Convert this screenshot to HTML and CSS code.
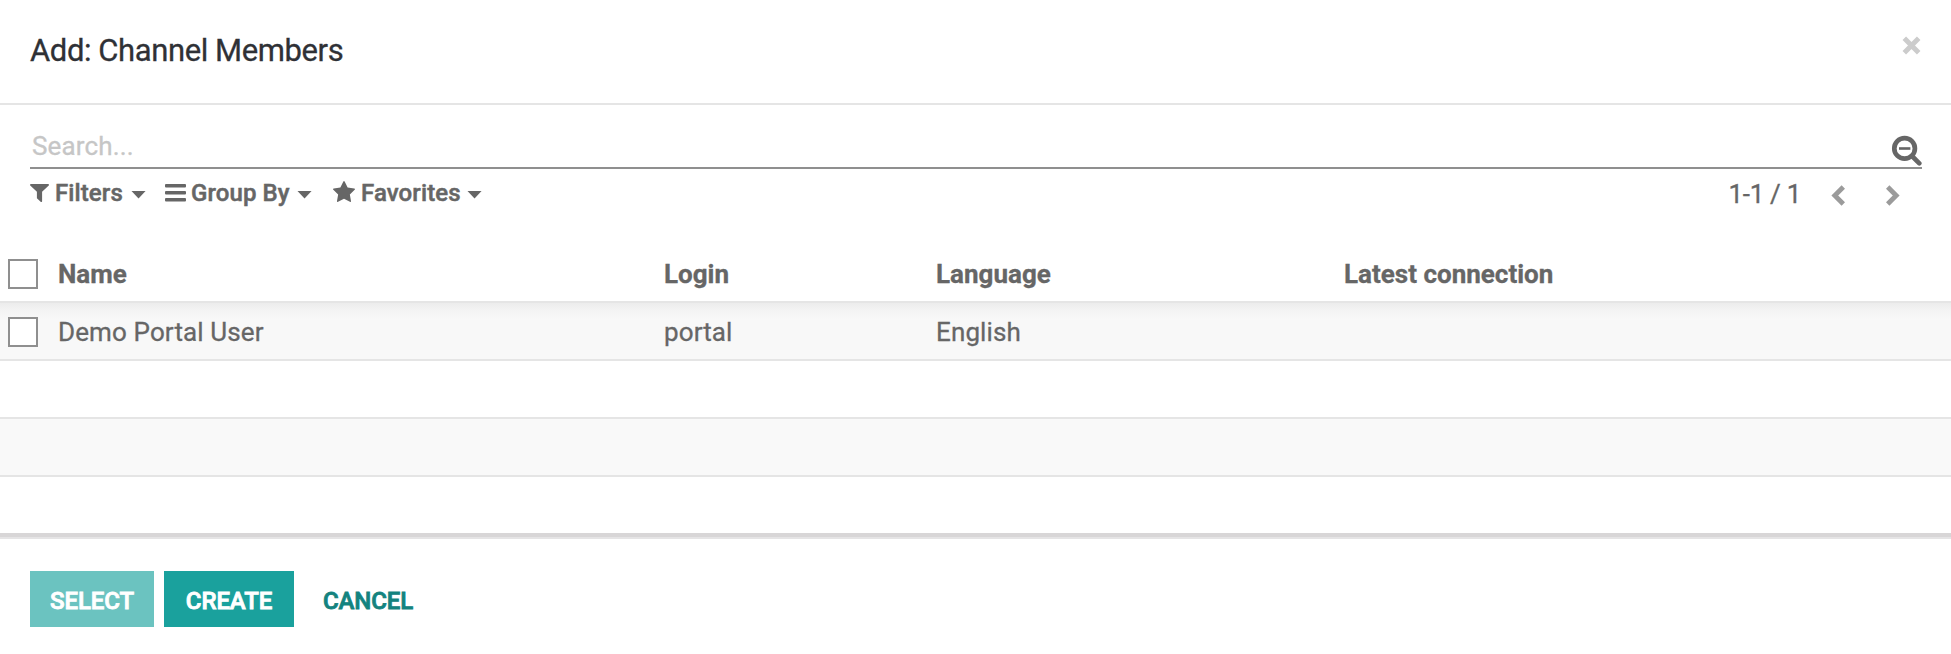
FILE: index.html
```html
<!DOCTYPE html>
<html lang="en">
<head>
<meta charset="utf-8">
<title>Add: Channel Members</title>
<link rel="stylesheet" href="styles.css">
</head>
<body>
<div class="modal">
  <header class="modal-header">
    <h4 class="modal-title">Add: Channel Members</h4>
    <button class="close" aria-label="Close">
      <svg width="19" height="19" viewBox="0 0 19 19"><path d="M2.3 2.3l14.4 14.4M16.700 2.300L2.300 16.700" fill="none" stroke="#ccc" stroke-width="5"/></svg>
    </button>
  </header>

  <section class="controls">
    <div class="search">
      <span class="placeholder">Search...</span>
      <svg class="search-icon" width="31" height="31" viewBox="0 0 31 31" fill="none" stroke="#666">
        <circle cx="13.600" cy="13.400" r="10.300" stroke-width="4.700"/>
        <path d="M21 21L28.300 28.300" stroke-width="4.600" stroke-linecap="round"/>
        <path d="M8 13.500h11.400" stroke-width="2.600"/>
      </svg>
    </div>
    <div class="toolbar">
      <button class="menu menu-filters">
        <svg width="19" height="18" viewBox="193 256 1406 1408" preserveAspectRatio="none"><path fill="#666" d="M1595 295q17 41-14 70l-493 493v742q0 42-39 59-13 5-25 5-27 0-45-19l-256-256q-19-19-19-45v-486l-493-493q-31-29-14-70 17-39 59-39h1280q42 0 59 39z"/></svg>
        <span class="label">Filters</span><i class="caret"></i>
      </button>
      <button class="menu menu-group">
        <svg width="21" height="18" viewBox="0 0 21 18" fill="#666"><rect width="21" height="3.500" rx="1"/><rect y="7" width="21" height="3.500" rx="1"/><rect y="14" width="21" height="3.500" rx="1"/></svg>
        <span class="label">Group By</span><i class="caret"></i>
      </button>
      <button class="menu menu-favorites">
        <svg class="star" width="22" height="21" viewBox="64 32 1664 1588" preserveAspectRatio="none"><path fill="#666" d="M1728 647q0 22-26 48l-363 354 86 500q1 7 1 20 0 21-10.500 35.500t-30.500 14.500q-19 0-40-12l-449-236-449 236q-22 12-40 12-21 0-31.500-14.500t-10.500-35.500q0-6 2-20l86-500-364-354q-25-27-25-48 0-37 56-46l502-73 225-455q19-41 49-41t49 41l225 455 502 73q56 9 56 46z"/></svg>
        <span class="label">Favorites</span><i class="caret"></i>
      </button>
      <div class="pager">
        <span class="pager-value">1-1 / 1</span>
        <svg class="prev" width="15" height="22" viewBox="0 0 15 22"><path d="M12.300 3L3.800 11.500l8.500 8.500" fill="none" stroke="#9b9b9b" stroke-width="4.800"/></svg>
        <svg class="next" width="15" height="22" viewBox="0 0 15 22"><path d="M2.700 3l8.500 8.500-8.500 8.500" fill="none" stroke="#9b9b9b" stroke-width="4.800"/></svg>
      </div>
    </div>
  </section>

  <section class="list">
    <div class="row head">
      <span class="check"><i class="box"></i></span><span class="name">Name</span><span>Login</span><span>Language</span><span class="latest">Latest connection</span>
    </div>
    <div class="row data">
      <span class="check"><i class="box"></i></span><span class="name">Demo Portal User</span><span>portal</span><span>English</span><span></span>
    </div>
    <div class="row"></div>
    <div class="row striped"></div>
    <div class="row last"></div>
  </section>

  <footer class="modal-footer">
    <button class="btn select">SELECT</button>
    <button class="btn create">CREATE</button>
    <button class="btn cancel">CANCEL</button>
  </footer>
</div>
</body>
</html>
```
FILE: styles.css
```css
* { box-sizing: border-box; }
body {
  margin: 0;
  background: #fff;
  color: #666;
  font-family: Roboto, "Liberation Sans", sans-serif;
  font-size: 26px;
  -webkit-text-stroke-width: .3px;
}
button { border: 0; padding: 0; background: none; font: inherit; color: inherit; }
svg { display: block; flex: none; }
.modal { height: 654px; overflow: hidden; display: flex; flex-direction: column; }

.modal-header {
  height: 105px;
  flex: none;
  padding: 0 30px;
  border-bottom: 2px solid #e5e5e5;
  display: flex;
  justify-content: space-between;
}
.modal-title {
  margin: 33px 0 0;
  font-size: 31px;
  font-weight: 400;
  line-height: 36px;
  letter-spacing: -.41px;
  color: #2f3136;
}
.close { height: 19px; margin-top: 36px; }

.controls { height: 140px; flex: none; padding: 0 29px 0 30px; }
.search {
  height: 64px;
  border-bottom: 2px solid #8f8f8f;
  display: flex;
  justify-content: space-between;
}
.placeholder { margin: 26px 0 0 2px; line-height: 30px; letter-spacing: .15px; color: #c6c6c6; }
.search-icon { margin-top: 30px; }

.toolbar { display: flex; padding-top: 10px; height: 50px; }
.menu {
  display: flex;
  align-items: center;
  height: 28px;
  font-size: 24px;
  font-weight: 500;
  line-height: 28px;
  letter-spacing: .1px;
  -webkit-text-stroke-width: .5px;
}
.menu .label { text-align: left; white-space: nowrap; }
.menu-filters { width: 135px; }
.menu-group { width: 168px; }
.menu-filters .label { width: 76px; margin-left: 6px; }
.menu-group .label { width: 106px; margin-left: 5px; }
.menu-favorites .label { width: 106px; margin-left: 6px; }
.star { margin-top: -3px; }
.caret { width: 15px; height: 8px; margin-top: 3px; background: #666; clip-path: polygon(0 0, 100% 0, 50% 100%); }

.pager { display: flex; margin-left: auto; padding-right: 22px; }
.pager-value { line-height: 30px; letter-spacing: -.3px; }
.prev, .next { margin-top: 5px; }
.prev { margin-left: 30px; }
.next { margin-left: 39px; }

.list { flex: none; }
.row {
  height: 58px;
  border-bottom: 2px solid #e5e5e5;
  display: grid;
  grid-template-columns: 58px 606px 272px 408px 1fr;
  line-height: 58px;
}
.head { font-weight: 700; }
.data {
  background: linear-gradient(#ececec, #f3f3f3 7px, #f8f8f8 16px);
  letter-spacing: .12px;
}
.striped { background: #f9f9f9; }
.last { height: 62px; border-bottom: 0; box-shadow: inset 0 -2px #e5e4e5, inset 0 -6px #d8d6d7; }
.check { padding: 14px 0 0 8px; line-height: 0; }
.box { display: block; width: 30px; height: 30px; background: #fff; border: 2px solid #8f8f8f; }

.modal-footer { display: flex; padding: 32px 30px 0; }
.btn {
  height: 56px;
  padding-top: 4px;
  font-size: 24px;
  font-weight: 500;
  line-height: 52px;
  letter-spacing: -.1px;
  -webkit-text-stroke-width: .8px;
}
.select { width: 124px; background: #6bc3c0; color: #fff; }
.create { width: 130px; margin-left: 10px; background: #1aa19d; color: #fff; }
.cancel { width: 148px; color: #13837f; }
```
